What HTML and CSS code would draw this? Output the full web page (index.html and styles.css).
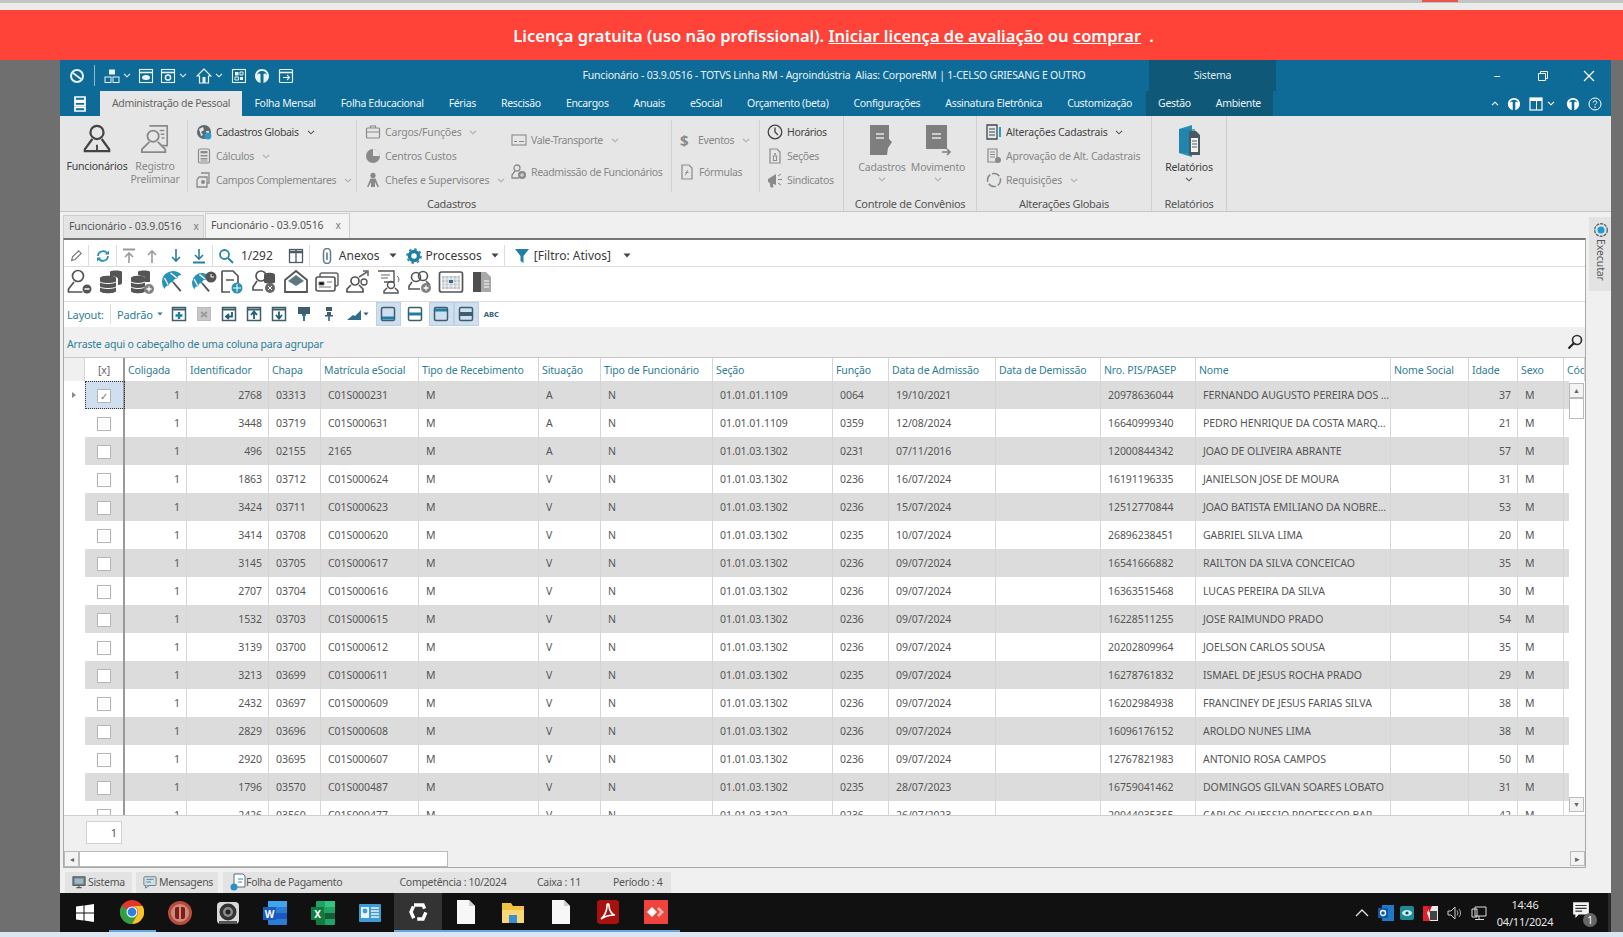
FILE: index.html
```html
<!DOCTYPE html>
<html lang="pt-BR">
<head>
<meta charset="utf-8">
<title>Funcionário - 03.9.0516 - TOTVS Linha RM</title>
<link rel="stylesheet" href="styles.css">
</head>
<body>
<svg class="defs" xmlns="http://www.w3.org/2000/svg">
  <symbol id="person" viewBox="0 0 32 32"><circle cx="16" cy="9" r="7" fill="none" stroke="currentColor" stroke-width="2.4"/><path d="M11 16 3 27v2h26v-2l-8-11" fill="none" stroke="currentColor" stroke-width="2.4"/><path d="M15 22h2v7h-2z" fill="currentColor"/></symbol>
  <symbol id="prelim" viewBox="0 0 32 32"><path d="M10 2h19v21h-6" fill="none" stroke="currentColor" stroke-width="1.8"/><path d="M21 7h5M22 11h4M23 15h3" stroke="currentColor" stroke-width="1.6"/><circle cx="14" cy="13" r="6" fill="none" stroke="currentColor" stroke-width="2"/><path d="M10 19 2 27v3h25v-3l-8-8" fill="none" stroke="currentColor" stroke-width="2"/></symbol>
  <symbol id="globe" viewBox="0 0 16 16"><circle cx="8" cy="8" r="7" fill="#5d6a72"/><path d="M3 5l4-2 1 3-3 2 2 3-2 1zM10 7l3 0 0 3-2 1z" fill="#e7e7e7"/><circle cx="12" cy="12" r="3.4" fill="#2a9cc7"/></symbol>
  <symbol id="calc" viewBox="0 0 16 16"><rect x="2.5" y="1" width="11" height="14" rx="1.5" fill="none" stroke="currentColor" stroke-width="1.2"/><rect x="4.5" y="3" width="7" height="2.4" fill="currentColor"/><path d="M4.5 7h7v1.6h-7zM4.5 10h7v1.6h-7zM4.5 12.6h7v1h-7z" fill="currentColor"/></symbol>
  <symbol id="fields" viewBox="0 0 16 16"><path d="M5 1h8v10h-2M3 5h8v10H1V8z" fill="none" stroke="currentColor" stroke-width="1.3"/><circle cx="7" cy="10" r="2" fill="currentColor"/></symbol>
  <symbol id="case" viewBox="0 0 16 16"><rect x="1.5" y="4" width="13" height="10" rx="1" fill="none" stroke="currentColor" stroke-width="1.2"/><path d="M5.5 4V2h5v2M1.5 8h13" fill="none" stroke="currentColor" stroke-width="1.2"/></symbol>
  <symbol id="pie" viewBox="0 0 16 16"><circle cx="8" cy="8" r="7" fill="currentColor"/><path d="M8 8V1a7 7 0 0 1 7 7z" fill="#e6e6e6"/></symbol>
  <symbol id="chief" viewBox="0 0 16 16"><circle cx="8" cy="3.4" r="2.6" fill="currentColor"/><path d="M5.5 6.5h5L12 10l2 5h-1.500L10 10v5H6v-5l-2.500 5H2l2-5z" fill="currentColor"/></symbol>
  <symbol id="ticket" viewBox="0 0 16 16"><rect x="1" y="3" width="14" height="10" fill="none" stroke="currentColor" stroke-width="1.1"/><path d="M3 9.5h3M8 9.5h5" stroke="currentColor"/></symbol>
  <symbol id="readm" viewBox="0 0 16 16"><circle cx="6" cy="4" r="3" fill="none" stroke="currentColor" stroke-width="1.3"/><path d="M4 7 1 11v3h7" fill="none" stroke="currentColor" stroke-width="1.3"/><circle cx="11" cy="11" r="4" fill="currentColor"/><path d="M9 11h4M11 9v4" stroke="#e6e6e6"/></symbol>
  <symbol id="formula" viewBox="0 0 16 16"><path d="M3 1h7l3 3v11H3z" fill="none" stroke="currentColor" stroke-width="1.2"/><path d="M9 6.5C7 6.5 8 11 6 11M6.5 8.5h3" fill="none" stroke="currentColor"/></symbol>
  <symbol id="clock" viewBox="0 0 16 16"><circle cx="8" cy="8" r="6.8" fill="none" stroke="currentColor" stroke-width="1.3"/><path d="M8 3.500V8l3 3" fill="none" stroke="currentColor" stroke-width="1.3"/></symbol>
  <symbol id="section" viewBox="0 0 16 16"><path d="M3 1h7l3 3v11H3z" fill="none" stroke="currentColor" stroke-width="1.2"/><rect x="6.4" y="8" width="3.2" height="4.5" fill="none" stroke="currentColor"/><circle cx="8" cy="6" r="1" fill="currentColor"/></symbol>
  <symbol id="horn" viewBox="0 0 16 16"><path d="M1 7l8-5v11L1 10z" fill="currentColor"/><path d="M3 10l1 5h2l-1-5zM11 4l3-2M11 7.500h4M11 11l3 2" stroke="currentColor" fill="currentColor"/></symbol>
  <symbol id="book" viewBox="0 0 28 32"><path d="M2 1h19v14l3 3-4 6-1 7H2z" fill="currentColor"/><path d="M8 10h8M8 14h8" stroke="#e6e6e6" stroke-width="1.6"/></symbol>
  <symbol id="bookgo" viewBox="0 0 28 32"><path d="M2 1h21v24H2z" fill="currentColor"/><path d="M8 10h9M8 14h9" stroke="#e6e6e6" stroke-width="1.6"/><path d="M18 28h8M23 25l3 3-3 3" stroke="currentColor" stroke-width="1.5" fill="none"/></symbol>
  <symbol id="altcad" viewBox="0 0 16 16"><path d="M1 1h10v14H1z" fill="none" stroke="#3d4a52" stroke-width="1.3"/><path d="M3 5h6M3 8h6M3 11h6" stroke="#3d4a52"/><path d="M14 3v10" stroke="#2a9cc7" stroke-width="2"/></symbol>
  <symbol id="aprov" viewBox="0 0 16 16"><path d="M2 1h9v13H2z" fill="none" stroke="currentColor" stroke-width="1.2"/><path d="M4 4h5M4 6.500h5M4 9h5" stroke="currentColor"/><circle cx="12" cy="12" r="3" fill="currentColor"/></symbol>
  <symbol id="req" viewBox="0 0 16 16"><path d="M8 1.500A6.500 6.500 0 0 1 14.500 8M14.500 8A6.500 6.500 0 0 1 8 14.500M8 14.500A6.500 6.500 0 0 1 1.500 8M1.500 8A6.500 6.500 0 0 1 8 1.500" fill="none" stroke="currentColor" stroke-width="1.500" stroke-dasharray="6 2"/></symbol>
  <symbol id="report" viewBox="0 0 24 34"><path d="M2 5 15 1v32L2 29z" fill="#2a8fb8"/><path d="M2 5h16v24H2z" fill="#1d7da6" opacity=".6"/><path d="M12 7h7l4 4v20H12z" fill="#4a5a63"/><path d="M14 14h7v14h-7z" fill="#f2f2f2"/><path d="M15 17h5M15 20h5M15 23h5" stroke="#4a5a63"/></symbol>
  <symbol id="chev" viewBox="0 0 8 5"><path d="M1 .8 4 3.800 7 .8" fill="none" stroke="currentColor" stroke-width="1.100"/></symbol>
  <symbol id="caret" viewBox="0 0 8 5"><path d="M.5.500h7L4 4.500z" fill="currentColor"/></symbol>

  <symbol id="q-target" viewBox="0 0 16 16"><circle cx="8" cy="8" r="6" fill="none" stroke="currentColor" stroke-width="2"/><path d="M4 5l8 6" stroke="currentColor" stroke-width="1.600"/></symbol>
  <symbol id="q-org" viewBox="0 0 16 16"><rect x="5" y="1.500" width="6" height="5" fill="currentColor"/><rect x="1" y="9" width="6" height="5.500" fill="none" stroke="currentColor"/><rect x="9" y="9" width="6" height="5.500" fill="none" stroke="currentColor"/></symbol>
  <symbol id="q-eye" viewBox="0 0 16 16"><rect x="1.500" y="1.500" width="13" height="13" fill="none" stroke="currentColor" stroke-width="1.100"/><path d="M1.500 4.500h13" stroke="currentColor" stroke-width="1.600"/><ellipse cx="8" cy="9.500" rx="4" ry="2.500" fill="currentColor"/></symbol>
  <symbol id="q-gear" viewBox="0 0 16 16"><rect x="1.500" y="1.500" width="13" height="13" fill="none" stroke="currentColor" stroke-width="1.100"/><path d="M1.500 4.500h13" stroke="currentColor" stroke-width="1.600"/><circle cx="8" cy="9.500" r="2.600" fill="none" stroke="currentColor" stroke-width="1.500"/></symbol>
  <symbol id="q-home" viewBox="0 0 16 16"><path d="M8 1 1 8h2.500v7h9V8H15z" fill="none" stroke="currentColor" stroke-width="1.200"/><rect x="6.500" y="9" width="3" height="6" fill="currentColor"/></symbol>
  <symbol id="q-grid" viewBox="0 0 16 16"><rect x="1.500" y="1.500" width="13" height="13" fill="none" stroke="currentColor" stroke-width="1.100"/><path d="M4 4h3.500v3.500H4zM9 9h3v3H9z" fill="currentColor"/><path d="M9 4h3v3H9zM4 9h3.500v3H4z" fill="none" stroke="currentColor"/></symbol>
  <symbol id="q-head" viewBox="0 0 16 16"><path d="M8 1C3.500 1 1 4.500 1 8c0 3 2 6 5.500 7V6C5 5 4 5.500 3 7c.5-2.500 2.500-4 5-4s4.500 1.500 5 4c-1-1.500-2-2-3.500-1v9c3.500-1 5.500-4 5.500-7 0-3.500-2.500-7-7-7z" fill="currentColor"/></symbol>
  <symbol id="q-export" viewBox="0 0 16 16"><rect x="1.500" y="1.500" width="13" height="13" rx="1" fill="none" stroke="currentColor" stroke-width="1.200"/><path d="M1.500 4.500h13" stroke="currentColor" stroke-width="1.600"/><path d="M5 9.500h6M9 7l2.500 2.500L9 12" fill="none" stroke="currentColor" stroke-width="1.100"/></symbol>
  <symbol id="q-menu" viewBox="0 0 14 16"><path d="M2 1h10v3.500H2zM2 6.200h10v3.500H2zM2 11.500h10V15H2z" fill="none" stroke="currentColor" stroke-width="1.700"/></symbol>
  <symbol id="q-restore" viewBox="0 0 12 12"><path d="M1.500 3.500h7v7h-7zM3.500 3.500v-2h7v7h-2" fill="none" stroke="currentColor" stroke-width="1"/></symbol>
  <symbol id="q-x" viewBox="0 0 12 12"><path d="M1 1l10 10M11 1 1 11" fill="none" stroke="currentColor" stroke-width="1.200"/></symbol>
  <symbol id="q-panel" viewBox="0 0 14 14"><rect x="1" y="1" width="12" height="12" fill="none" stroke="currentColor" stroke-width="1.200"/><rect x="1" y="1" width="12" height="3" fill="currentColor"/><path d="M7.500 4v9" stroke="currentColor"/></symbol>
  <symbol id="q-help" viewBox="0 0 14 14"><circle cx="7" cy="7" r="6" fill="none" stroke="currentColor"/><path d="M5.200 5.500C5.200 3 9 3.400 8.800 5.400 8.700 6.700 7 6.800 7 8.300" fill="none" stroke="currentColor"/><circle cx="7" cy="10.300" r=".8" fill="currentColor"/></symbol>

  <symbol id="t-pencil" viewBox="0 0 16 16"><path d="M3 13l1-4 7-7 3 3-7 7z" fill="none" stroke="#777" stroke-width="1.300"/></symbol>
  <symbol id="t-refresh" viewBox="0 0 16 16"><path d="M13 8a5 5 0 0 1-9.500 2M3 8a5 5 0 0 1 9.500-2" fill="none" stroke="#2a93b5" stroke-width="1.800"/><path d="M10 6.500h4V2.500zM6 9.500H2v4z" fill="#2a93b5"/></symbol>
  <symbol id="t-top" viewBox="0 0 16 16"><path d="M2 1.500h12" stroke="#9a9a9a" stroke-width="2"/><path d="M8 15V5M4 9l4-4 4 4" fill="none" stroke="#9a9a9a" stroke-width="1.600"/></symbol>
  <symbol id="t-up" viewBox="0 0 16 16"><path d="M8 15V3M4 7l4-4 4 4" fill="none" stroke="#9a9a9a" stroke-width="1.600"/></symbol>
  <symbol id="t-down" viewBox="0 0 16 16"><path d="M8 1v12M4 9l4 4 4-4" fill="none" stroke="#2a7fa0" stroke-width="1.600"/></symbol>
  <symbol id="t-bottom" viewBox="0 0 16 16"><path d="M8 1v10M4 7l4 4 4-4" fill="none" stroke="#2a7fa0" stroke-width="1.600"/><path d="M2 14.500h12" stroke="#2a7fa0" stroke-width="2"/></symbol>
  <symbol id="t-search" viewBox="0 0 16 16"><circle cx="6.500" cy="6.500" r="4.500" fill="none" stroke="#2a86a8" stroke-width="1.800"/><path d="M10 10l5 5" stroke="#2a86a8" stroke-width="2"/></symbol>
  <symbol id="t-cols" viewBox="0 0 16 16"><rect x="1.500" y="1.500" width="13" height="13" fill="none" stroke="#4a5a63" stroke-width="1.300"/><path d="M1.500 4h13" stroke="#4a5a63" stroke-width="2.500"/><path d="M8 2v12" stroke="#4a5a63" stroke-width="1.300"/></symbol>
  <symbol id="t-clip" viewBox="0 0 16 16"><path d="M4.500 4a3.500 3.500 0 0 1 7 0v8a3.500 3.500 0 0 1-7 0z" fill="none" stroke="#5f7c88" stroke-width="1.500"/><path d="M7 4.500h2V12H7z" fill="#7d98a3"/></symbol>
  <symbol id="t-gear" viewBox="0 0 16 16"><circle cx="8" cy="8" r="4.500" fill="none" stroke="#1f7fa3" stroke-width="3.500"/><circle cx="8" cy="8" r="7" fill="none" stroke="#1f7fa3" stroke-width="1.500" stroke-dasharray="2.500 3"/></symbol>
  <symbol id="t-funnel" viewBox="0 0 16 16"><path d="M1 1h14L9.500 8v7l-3-2V8z" fill="#1f7fa3"/></symbol>

  <symbol id="a-user" viewBox="0 0 26 26"><circle cx="11" cy="7" r="5.500" fill="none" stroke="#555" stroke-width="1.700"/><path d="M7 13 1.500 20v3h14" fill="none" stroke="#555" stroke-width="1.700"/><circle cx="20" cy="20" r="4.500" fill="#555"/><path d="M17.500 20h5" stroke="#fff" stroke-width="1.500"/></symbol>
  <symbol id="a-db" viewBox="0 0 26 26"><path d="M12 3c0-2 12-2 12 0v11c0 1-2 2-4 2v-6c0-2-4-3-8-3z" fill="#555"/><path d="M2 9c0-3 16-3 16 0v13c0 3-16 3-16 0z" fill="#555"/><path d="M2 13c3 2 13 2 16 0M2 18c3 2 13 2 16 0" fill="none" stroke="#fff"/></symbol>
  <symbol id="a-dbp" viewBox="0 0 26 26"><path d="M2 9c0-3 14-3 14 0v13c0 3-14 3-14 0z" fill="#555"/><path d="M9 3c0-2 12-2 12 0v10H16V8l-7-2z" fill="#555"/><path d="M2 13c3 2 11 2 14 0M2 18c3 2 11 2 14 0" fill="none" stroke="#fff"/><circle cx="20" cy="20" r="5" fill="#808080"/><path d="M17.500 20h5M20 17.500v5" stroke="#fff" stroke-width="1.300"/></symbol>
  <symbol id="a-umb" viewBox="0 0 26 26"><g transform="rotate(-40 13 13)"><path d="M2 13a11 11 0 0 1 22 0c-2-1.500-4-1.500-5.500 0-1.500-1.500-4-1.500-5.500 0-1.500-1.500-4-1.500-5.500 0C6 11.500 4 11.500 2 13z" fill="#2a93b5"/><path d="M9 4.500 7.500 12M17 4.500l1.500 7.500" stroke="#fff" stroke-width="1.300"/><path d="M13 13v12" stroke="#555" stroke-width="1.900"/></g></symbol>
  <symbol id="a-umbc" viewBox="0 0 26 26"><g transform="rotate(-40 11 14)"><path d="M1 14a10 10 0 0 1 20 0c-2-1.500-3.500-1.500-5 0-1.500-1.500-3.500-1.500-5 0-1.500-1.500-3.500-1.500-5 0-1.500-1.500-3-1.500-5 0z" fill="#2a93b5"/><path d="M7.500 6 6 13M14.500 6 16 13" stroke="#fff" stroke-width="1.300"/><path d="M11 14v11" stroke="#555" stroke-width="1.900"/></g><circle cx="20" cy="8" r="5.500" fill="#555"/><path d="M20 5v3h3" stroke="#fff" fill="none"/></symbol>
  <symbol id="a-docg" viewBox="0 0 26 26"><path d="M4 2h11l5 5v7M4 2v21h8" fill="none" stroke="#555" stroke-width="1.700"/><path d="M8 11h8" stroke="#555" stroke-width="1.500"/><circle cx="19" cy="19" r="5.500" fill="#2a93b5"/><path d="M15 19h8M19 15v8" stroke="#fff"/></symbol>
  <symbol id="a-userdb" viewBox="0 0 26 26"><circle cx="9" cy="7" r="5" fill="none" stroke="#555" stroke-width="1.700"/><path d="M5 12 1 18v3h10" fill="none" stroke="#555" stroke-width="1.700"/><path d="M12 6c0-3 11-3 11 0v7c0 2-11 2-11 0z" fill="#555"/><circle cx="18" cy="19" r="5" fill="#666"/><path d="M16 17l4 4M20 17l-4 4" stroke="#fff"/></symbol>
  <symbol id="a-mail" viewBox="0 0 26 26"><path d="M2 11 13 2l11 9v12H2z" fill="none" stroke="#555" stroke-width="1.800"/><path d="M5 12l8-6 8 6-8 5z" fill="#5d7783"/></symbol>
  <symbol id="a-card" viewBox="0 0 26 26"><rect x="6" y="4" width="18" height="13" rx="2" fill="none" stroke="#666" stroke-width="1.500"/><rect x="2" y="8" width="19" height="14" rx="2" fill="#fff" stroke="#555" stroke-width="1.600"/><path d="M5 13h5v3H5zM5 18h12M13 13h5" stroke="#777"/></symbol>
  <symbol id="a-usergo" viewBox="0 0 26 26"><circle cx="10" cy="12" r="4" fill="none" stroke="#555" stroke-width="1.700"/><path d="M6 16l-4 4v3h16v-3l-4-4" fill="none" stroke="#555" stroke-width="1.700"/><path d="M14 8l8-5M18 2h5v5" fill="none" stroke="#666" stroke-width="1.500"/><circle cx="19" cy="13" r="3" fill="none" stroke="#555" stroke-width="1.300"/></symbol>
  <symbol id="a-userdoc" viewBox="0 0 26 26"><path d="M2 2h16v11H8" fill="none" stroke="#555" stroke-width="1.400"/><path d="M5 6h9M5 9h7" stroke="#666"/><circle cx="15" cy="16" r="3.500" fill="none" stroke="#555" stroke-width="1.500"/><path d="M11 19l-3 3v2h14v-2l-3-3" fill="none" stroke="#555" stroke-width="1.500"/><path d="M21 7a4 4 0 0 1 1 6" stroke="#666" fill="none"/></symbol>
  <symbol id="a-userp" viewBox="0 0 26 26"><circle cx="9" cy="8" r="4.500" fill="none" stroke="#555" stroke-width="1.600"/><circle cx="16" cy="7" r="4.500" fill="none" stroke="#555" stroke-width="1.600"/><path d="M5 13l-3 4v3h11M19 12l4 4" fill="none" stroke="#555" stroke-width="1.600"/><circle cx="19" cy="19" r="5" fill="#808080"/><path d="M16.500 19h5M19 16.500v5" stroke="#fff" stroke-width="1.300"/></symbol>
  <symbol id="a-cal" viewBox="0 0 26 26"><rect x="1.500" y="3" width="23" height="20" rx="2" fill="#fff" stroke="#555" stroke-width="1.700"/><path d="M4 7h18v13H4z" fill="#bcc4c8"/><path d="M7 7v13M11 7v13M15 7v13M19 7v13M4 10h18M4 14h18M4 17h18" stroke="#fff" stroke-width=".8"/><rect x="11" y="11" width="4" height="3" fill="#2a6f8a"/></symbol>
  <symbol id="a-doc" viewBox="0 0 26 26"><path d="M4 3h10v20H4z" fill="#4f4f4f"/><path d="M12 3h5l5 5v15H12z" fill="#a9a9a9"/><path d="M15 12h5M15 15h5M15 18h5" stroke="#fff"/></symbol>

  <symbol id="l-new" viewBox="0 0 16 16"><rect x="1.500" y="1.500" width="13" height="13" fill="none" stroke="#3f5e6c" stroke-width="1.500"/><path d="M1.500 3.500h13" stroke="#3f5e6c" stroke-width="2"/><path d="M4.500 9.500h7M8 6v7" stroke="#1f7fa3" stroke-width="2.400"/></symbol>
  <symbol id="l-del" viewBox="0 0 16 16"><rect x="1.500" y="1.500" width="13" height="13" fill="#c7c7c7" stroke="#bbb"/><path d="M5 6l6 5M11 6l-6 5" stroke="#999" stroke-width="1.800"/></symbol>
  <symbol id="l-ret" viewBox="0 0 16 16"><rect x="1.500" y="1.500" width="13" height="13" fill="none" stroke="#3f5e6c" stroke-width="1.500"/><path d="M1.500 3.500h13" stroke="#3f5e6c" stroke-width="2"/><path d="M11 6v4.500H6M8 8l-3 2.500L8 13" fill="none" stroke="#1f5f7a" stroke-width="1.800"/></symbol>
  <symbol id="l-up" viewBox="0 0 16 16"><rect x="1.500" y="1.500" width="13" height="13" fill="none" stroke="#3f5e6c" stroke-width="1.500"/><path d="M1.500 3.500h13" stroke="#3f5e6c" stroke-width="2"/><path d="M8 13V7M5 9l3-3.500L11 9" fill="none" stroke="#1f5f7a" stroke-width="1.800"/></symbol>
  <symbol id="l-down" viewBox="0 0 16 16"><rect x="1.500" y="1.500" width="13" height="13" fill="none" stroke="#3f5e6c" stroke-width="1.500"/><path d="M1.500 3.500h13" stroke="#3f5e6c" stroke-width="2"/><path d="M8 5.500v6M5 9l3 3.500L11 9" fill="none" stroke="#1f5f7a" stroke-width="1.800"/></symbol>
  <symbol id="l-paint" viewBox="0 0 16 16"><path d="M2 1h12v7H2z" fill="#3f5e6c"/><path d="M6 8h4v2H6zM7 10h2v5H7z" fill="#2a7fa0"/></symbol>
  <symbol id="l-pin" viewBox="0 0 16 16"><path d="M5 1h6v4H5zM6 6h4v4H6zM4 9h8v1.500H4z" fill="#3f5e6c"/><path d="M8 10v5" stroke="#2a7fa0" stroke-width="1.800"/></symbol>
  <symbol id="l-chart" viewBox="0 0 16 16"><path d="M1 14 7 9l2 1 6-6v10z" fill="#2f6f8c"/></symbol>
  <symbol id="l-b1" viewBox="0 0 16 16"><rect x="1.500" y="1.500" width="13" height="13" rx="1.500" fill="none" stroke="#3f5e6c" stroke-width="1.500"/><path d="M2 12h12" stroke="#1f7fa3" stroke-width="3"/></symbol>
  <symbol id="l-b2" viewBox="0 0 16 16"><rect x="1.500" y="1.500" width="13" height="13" rx="1.500" fill="none" stroke="#3f5e6c" stroke-width="1.500"/><path d="M2 8h12" stroke="#1f7fa3" stroke-width="3"/></symbol>
  <symbol id="l-b3" viewBox="0 0 16 16"><rect x="1.500" y="1.500" width="13" height="13" rx="1.500" fill="none" stroke="#3f5e6c" stroke-width="1.500"/><path d="M2 4h12" stroke="#1f7fa3" stroke-width="3"/></symbol>
  <symbol id="l-b4" viewBox="0 0 16 16"><rect x="1.500" y="1.500" width="13" height="13" rx="1.500" fill="none" stroke="#3f5e6c" stroke-width="1.500"/><path d="M2 8h12" stroke="#3f5e6c" stroke-width="4"/></symbol>
  <symbol id="s-exec" viewBox="0 0 16 16"><circle cx="8" cy="8" r="6.300" fill="none" stroke="#5b6a72" stroke-width="1.400" stroke-dasharray="3 1"/><circle cx="8" cy="8" r="3.500" fill="#1a9ccf"/></symbol>
  <symbol id="s-mag" viewBox="0 0 16 16"><circle cx="10" cy="6" r="4.500" fill="none" stroke="#333" stroke-width="1.700"/><path d="M7 9l-5.500 5.500" stroke="#222" stroke-width="2.200"/></symbol>
  <symbol id="s-monitor" viewBox="0 0 16 16"><rect x="1" y="2" width="14" height="10" fill="#6a7e88" stroke="#555"/><rect x="3" y="4" width="10" height="6" fill="#9fb8c4"/><path d="M5 14.500h6M8 12v2" stroke="#555" stroke-width="1.300"/></symbol>
  <symbol id="s-msg" viewBox="0 0 16 16"><rect x="1" y="2" width="14" height="10" rx="1" fill="#cfdfe7" stroke="#5b7582"/><path d="M3 12v3l4-3" fill="#cfdfe7" stroke="#5b7582"/><path d="M4 5h8M4 8h5" stroke="#5b7582"/></symbol>
  <symbol id="s-folha" viewBox="0 0 16 18"><path d="M4 1h9l2 2v11H4z" fill="#fff" stroke="#667"/><circle cx="4" cy="14" r="3.500" fill="#2a93c5"/><path d="M8 6h5M8 9h4" stroke="#2a93c5" stroke-width="1.200"/></symbol>
  <symbol id="w-paper" viewBox="0 0 20 26"><path d="M1 1h12l6 6v18H1z" fill="#f7f7f7"/><path d="M13 1l6 6h-6z" fill="#cfcfcf"/></symbol>
</svg>

<div class="browserbar"><span class="browsermark"></span></div>
<div class="banner">Licença gratuita (uso não profissional). <a class="banner-link">Iniciar licença de avaliação</a> ou <a class="banner-link">comprar</a> <span class="banner-dot">.</span></div>

<div class="desk">
  <main class="window">
    <header class="titlebar">
      <div class="qat">
        <svg class="qi"><use href="#q-target"/></svg>
        <span class="qat-sep"></span>
        <svg class="qi"><use href="#q-org"/></svg><svg class="qc"><use href="#chev"/></svg>
        <svg class="qi q7"><use href="#q-eye"/></svg>
        <svg class="qi q6"><use href="#q-gear"/></svg><svg class="qc"><use href="#chev"/></svg>
        <svg class="qi q9"><use href="#q-home"/></svg><svg class="qc"><use href="#chev"/></svg>
        <svg class="qi q8"><use href="#q-grid"/></svg>
        <svg class="qi q7"><use href="#q-head"/></svg>
        <svg class="qi q8"><use href="#q-export"/></svg>
      </div>
      <div class="wintitle">Funcionário - 03.9.0516 - TOTVS Linha RM - Agroindústria&nbsp; Alias: CorporeRM | 1-CELSO GRIESANG E OUTRO</div>
      <div class="sistema">Sistema</div>
      <div class="winbtns">
        <span class="wb">–</span>
        <svg class="wbi"><use href="#q-restore"/></svg>
        <svg class="wbi"><use href="#q-x"/></svg>
      </div>
    </header>

    <nav class="tabbar">
      <svg class="menuicon"><use href="#q-menu"/></svg>
      <span class="tab tab-active">Administração de Pessoal</span>
      <span class="tab">Folha Mensal</span>
      <span class="tab">Folha Educacional</span>
      <span class="tab">Férias</span>
      <span class="tab">Rescisão</span>
      <span class="tab">Encargos</span>
      <span class="tab">Anuais</span>
      <span class="tab">eSocial</span>
      <span class="tab">Orçamento (beta)</span>
      <span class="tab">Configurações</span>
      <span class="tab">Assinatura Eletrônica</span>
      <span class="tab">Customização</span>
      <div class="tab-ctx"><span class="tab">Gestão</span><span class="tab">Ambiente</span></div>
      <div class="tab-tools">
        <svg class="ti-chev ti-up"><use href="#chev"/></svg>
        <svg class="ti"><use href="#q-head"/></svg>
        <svg class="ti"><use href="#q-panel"/></svg>
        <svg class="ti-chev ti-near"><use href="#chev"/></svg>
        <svg class="ti"><use href="#q-head"/></svg>
        <svg class="ti"><use href="#q-help"/></svg>
      </div>
    </nav>

    <section class="ribbon">
      <div class="rgroup g-cad">
        <div class="rbody">
          <div class="rcol c-big">
            <div class="bigbtn"><svg class="bigicon dark"><use href="#person"/></svg><span class="on">Funcionários</span></div>
            <div class="bigbtn"><svg class="bigicon"><use href="#prelim"/></svg><span>Registro<br>Preliminar</span></div>
          </div>
          <div class="rcol c-a sep">
            <div class="ritem on"><svg class="ri"><use href="#globe"/></svg>Cadastros Globais<svg class="rc"><use href="#chev"/></svg></div>
            <div class="ritem"><svg class="ri"><use href="#calc"/></svg>Cálculos<svg class="rc"><use href="#chev"/></svg></div>
            <div class="ritem"><svg class="ri"><use href="#fields"/></svg>Campos Complementares<svg class="rc"><use href="#chev"/></svg></div>
          </div>
          <div class="rcol c-b sep">
            <div class="ritem"><svg class="ri"><use href="#case"/></svg>Cargos/Funções<svg class="rc"><use href="#chev"/></svg></div>
            <div class="ritem"><svg class="ri"><use href="#pie"/></svg>Centros Custos</div>
            <div class="ritem"><svg class="ri"><use href="#chief"/></svg>Chefes e Supervisores<svg class="rc"><use href="#chev"/></svg></div>
          </div>
          <div class="rcol c-c two">
            <div class="ritem"><svg class="ri"><use href="#ticket"/></svg>Vale-Transporte<svg class="rc"><use href="#chev"/></svg></div>
            <div class="ritem"><svg class="ri"><use href="#readm"/></svg>Readmissão de Funcionários</div>
          </div>
          <div class="rcol c-d two sep">
            <div class="ritem"><span class="dollar">$</span>Eventos<svg class="rc"><use href="#chev"/></svg></div>
            <div class="ritem"><svg class="ri"><use href="#formula"/></svg>Fórmulas</div>
          </div>
          <div class="rcol c-e sep">
            <div class="ritem on"><svg class="ri"><use href="#clock"/></svg>Horários</div>
            <div class="ritem"><svg class="ri"><use href="#section"/></svg>Seções</div>
            <div class="ritem"><svg class="ri"><use href="#horn"/></svg>Sindicatos</div>
          </div>
        </div>
        <div class="rlabel">Cadastros</div>
      </div>
      <div class="rgroup g-conv">
        <div class="rbody rcenter">
          <div class="bigbtn b-conv"><svg class="bookicon"><use href="#book"/></svg><span>Cadastros</span><svg class="rc2"><use href="#chev"/></svg></div>
          <div class="bigbtn b-conv"><svg class="bookicon"><use href="#bookgo"/></svg><span>Movimento</span><svg class="rc2"><use href="#chev"/></svg></div>
        </div>
        <div class="rlabel">Controle de Convênios</div>
      </div>
      <div class="rgroup g-alt">
        <div class="rbody">
          <div class="rcol c-f">
            <div class="ritem on"><svg class="ri"><use href="#altcad"/></svg>Alterações Cadastrais<svg class="rc"><use href="#chev"/></svg></div>
            <div class="ritem"><svg class="ri"><use href="#aprov"/></svg>Aprovação de Alt. Cadastrais</div>
            <div class="ritem"><svg class="ri"><use href="#req"/></svg>Requisições<svg class="rc"><use href="#chev"/></svg></div>
          </div>
        </div>
        <div class="rlabel">Alterações Globais</div>
      </div>
      <div class="rgroup g-rel">
        <div class="rbody rcenter">
          <div class="bigbtn b-rel"><svg class="reporticon"><use href="#report"/></svg><span class="on">Relatórios</span><svg class="rc2 on"><use href="#chev"/></svg></div>
        </div>
        <div class="rlabel">Relatórios</div>
      </div>
    </section>

    <div class="doctabs">
      <span class="doctab">Funcionário - 03.9.0516<span class="x">x</span></span>
      <span class="doctab doctab-active">Funcionário - 03.9.0516<span class="x">x</span></span>
    </div>

    <div class="workspace">
      <div class="panel">
        <div class="tb tb1">
          <svg class="t1 t-pen"><use href="#t-pencil"/></svg><i class="vs"></i>
          <svg class="t1 t-r"><use href="#t-refresh"/></svg><i class="vs"></i>
          <svg class="t1 t-t"><use href="#t-top"/></svg>
          <svg class="t1 g8"><use href="#t-up"/></svg>
          <svg class="t1 g8"><use href="#t-down"/></svg>
          <svg class="t1 g8"><use href="#t-bottom"/></svg><i class="vs"></i>
          <svg class="t1"><use href="#t-search"/></svg>
          <span class="tt pg">1/292</span>
          <svg class="t1"><use href="#t-cols"/></svg><i class="vs"></i>
          <svg class="t1 g-c"><use href="#t-clip"/></svg>
          <span class="tt">Anexos</span><svg class="ca"><use href="#caret"/></svg>
          <svg class="t1 g-p"><use href="#t-gear"/></svg>
          <span class="tt">Processos</span><svg class="ca"><use href="#caret"/></svg><i class="vs"></i>
          <svg class="t1 g-c"><use href="#t-funnel"/></svg>
          <span class="tt">[Filtro: Ativos]</span><svg class="ca ca-f"><use href="#caret"/></svg>
        </div>
        <div class="tb tb2">
          <svg class="a"><use href="#a-user"/></svg>
          <svg class="a"><use href="#a-db"/></svg>
          <svg class="a"><use href="#a-dbp"/></svg>
          <svg class="a"><use href="#a-umb"/></svg>
          <svg class="a"><use href="#a-umbc"/></svg>
          <svg class="a a-t"><use href="#a-docg"/></svg>
          <svg class="a a-w"><use href="#a-userdb"/></svg>
          <svg class="a"><use href="#a-mail"/></svg>
          <svg class="a"><use href="#a-card"/></svg>
          <svg class="a"><use href="#a-usergo"/></svg>
          <svg class="a"><use href="#a-userdoc"/></svg>
          <svg class="a"><use href="#a-userp"/></svg>
          <svg class="a"><use href="#a-cal"/></svg>
          <svg class="a"><use href="#a-doc"/></svg>
        </div>
        <div class="tb tb3">
          <span class="lt">Layout:</span><i class="vs vs2"></i>
          <span class="lt lt-p">Padrão</span><svg class="ca2"><use href="#caret"/></svg>
          <span class="lb l-first"><svg class="l"><use href="#l-new"/></svg></span>
          <span class="lb"><svg class="l"><use href="#l-del"/></svg></span>
          <span class="lb"><svg class="l"><use href="#l-ret"/></svg></span>
          <span class="lb"><svg class="l"><use href="#l-up"/></svg></span>
          <span class="lb"><svg class="l"><use href="#l-down"/></svg></span>
          <span class="lb"><svg class="l"><use href="#l-paint"/></svg></span>
          <span class="lb"><svg class="l"><use href="#l-pin"/></svg></span>
          <span class="lb"><svg class="l"><use href="#l-chart"/></svg></span><svg class="ca3"><use href="#caret"/></svg>
          <span class="lb lb-on"><svg class="l"><use href="#l-b1"/></svg></span>
          <span class="lb lb-g"><svg class="l"><use href="#l-b2"/></svg></span>
          <span class="lb lb-on"><svg class="l"><use href="#l-b3"/></svg></span>
          <span class="lb lb-on"><svg class="l"><use href="#l-b4"/></svg></span>
          <span class="abc">ABC</span>
        </div>
        <div class="groupbar"><span>Arraste aqui o cabeçalho de uma coluna para agrupar</span><svg class="mag"><use href="#s-mag"/></svg></div>
        <div class="gridwrap">
          <table class="grid">
            <colgroup>
              <col class="w21"><col class="w40"><col class="w62"><col class="w82"><col class="w52"><col class="w98"><col class="w120"><col class="w62b"><col class="w112"><col class="w120"><col class="w56"><col class="w107"><col class="w105"><col class="w95"><col class="w195"><col class="w78"><col class="w49"><col class="w46"><col class="w22">
            </colgroup>
            <thead>
              <tr><th class="rh"></th><th class="chk">[x]</th><th>Coligada</th><th>Identificador</th><th>Chapa</th><th>Matrícula eSocial</th><th>Tipo de Recebimento</th><th>Situação</th><th>Tipo de Funcionário</th><th>Seção</th><th>Função</th><th>Data de Admissão</th><th>Data de Demissão</th><th>Nro. PIS/PASEP</th><th>Nome</th><th>Nome Social</th><th>Idade</th><th>Sexo</th><th>Cód</th></tr>
            </thead>
            <tbody>
              <tr class="alt"><td class="rh"><span class="arrow"></span></td><td class="chk sel"><span class="cb cb-on">✓</span></td><td class="r">1</td><td class="r">2768</td><td>03313</td><td>C01S000231</td><td>M</td><td>A</td><td>N</td><td>01.01.01.1109</td><td>0064</td><td>19/10/2021</td><td></td><td>20978636044</td><td>FERNANDO AUGUSTO PEREIRA DOS ...</td><td></td><td class="r">37</td><td>M</td><td class="gut"></td></tr>
              <tr><td class="rh"></td><td class="chk"><span class="cb"></span></td><td class="r">1</td><td class="r">3448</td><td>03719</td><td>C01S000631</td><td>M</td><td>A</td><td>N</td><td>01.01.01.1109</td><td>0359</td><td>12/08/2024</td><td></td><td>16640999340</td><td>PEDRO HENRIQUE DA COSTA MARQ...</td><td></td><td class="r">21</td><td>M</td><td class="gut"></td></tr>
              <tr class="alt"><td class="rh"></td><td class="chk"><span class="cb"></span></td><td class="r">1</td><td class="r">496</td><td>02155</td><td>2165</td><td>M</td><td>A</td><td>N</td><td>01.01.03.1302</td><td>0231</td><td>07/11/2016</td><td></td><td>12000844342</td><td>JOAO DE OLIVEIRA ABRANTE</td><td></td><td class="r">57</td><td>M</td><td class="gut"></td></tr>
              <tr><td class="rh"></td><td class="chk"><span class="cb"></span></td><td class="r">1</td><td class="r">1863</td><td>03712</td><td>C01S000624</td><td>M</td><td>V</td><td>N</td><td>01.01.03.1302</td><td>0236</td><td>16/07/2024</td><td></td><td>16191196335</td><td>JANIELSON JOSE DE MOURA</td><td></td><td class="r">31</td><td>M</td><td class="gut"></td></tr>
              <tr class="alt"><td class="rh"></td><td class="chk"><span class="cb"></span></td><td class="r">1</td><td class="r">3424</td><td>03711</td><td>C01S000623</td><td>M</td><td>V</td><td>N</td><td>01.01.03.1302</td><td>0236</td><td>15/07/2024</td><td></td><td>12512770844</td><td>JOAO BATISTA EMILIANO DA NOBRE...</td><td></td><td class="r">53</td><td>M</td><td class="gut"></td></tr>
              <tr><td class="rh"></td><td class="chk"><span class="cb"></span></td><td class="r">1</td><td class="r">3414</td><td>03708</td><td>C01S000620</td><td>M</td><td>V</td><td>N</td><td>01.01.03.1302</td><td>0235</td><td>10/07/2024</td><td></td><td>26896238451</td><td>GABRIEL SILVA LIMA</td><td></td><td class="r">20</td><td>M</td><td class="gut"></td></tr>
              <tr class="alt"><td class="rh"></td><td class="chk"><span class="cb"></span></td><td class="r">1</td><td class="r">3145</td><td>03705</td><td>C01S000617</td><td>M</td><td>V</td><td>N</td><td>01.01.03.1302</td><td>0236</td><td>09/07/2024</td><td></td><td>16541666882</td><td>RAILTON DA SILVA CONCEICAO</td><td></td><td class="r">35</td><td>M</td><td class="gut"></td></tr>
              <tr><td class="rh"></td><td class="chk"><span class="cb"></span></td><td class="r">1</td><td class="r">2707</td><td>03704</td><td>C01S000616</td><td>M</td><td>V</td><td>N</td><td>01.01.03.1302</td><td>0236</td><td>09/07/2024</td><td></td><td>16363515468</td><td>LUCAS PEREIRA DA SILVA</td><td></td><td class="r">30</td><td>M</td><td class="gut"></td></tr>
              <tr class="alt"><td class="rh"></td><td class="chk"><span class="cb"></span></td><td class="r">1</td><td class="r">1532</td><td>03703</td><td>C01S000615</td><td>M</td><td>V</td><td>N</td><td>01.01.03.1302</td><td>0236</td><td>09/07/2024</td><td></td><td>16228511255</td><td>JOSE RAIMUNDO PRADO</td><td></td><td class="r">54</td><td>M</td><td class="gut"></td></tr>
              <tr><td class="rh"></td><td class="chk"><span class="cb"></span></td><td class="r">1</td><td class="r">3139</td><td>03700</td><td>C01S000612</td><td>M</td><td>V</td><td>N</td><td>01.01.03.1302</td><td>0236</td><td>09/07/2024</td><td></td><td>20202809964</td><td>JOELSON CARLOS SOUSA</td><td></td><td class="r">35</td><td>M</td><td class="gut"></td></tr>
              <tr class="alt"><td class="rh"></td><td class="chk"><span class="cb"></span></td><td class="r">1</td><td class="r">3213</td><td>03699</td><td>C01S000611</td><td>M</td><td>V</td><td>N</td><td>01.01.03.1302</td><td>0235</td><td>09/07/2024</td><td></td><td>16278761832</td><td>ISMAEL DE JESUS ROCHA PRADO</td><td></td><td class="r">29</td><td>M</td><td class="gut"></td></tr>
              <tr><td class="rh"></td><td class="chk"><span class="cb"></span></td><td class="r">1</td><td class="r">2432</td><td>03697</td><td>C01S000609</td><td>M</td><td>V</td><td>N</td><td>01.01.03.1302</td><td>0236</td><td>09/07/2024</td><td></td><td>16202984938</td><td>FRANCINEY DE JESUS FARIAS SILVA</td><td></td><td class="r">38</td><td>M</td><td class="gut"></td></tr>
              <tr class="alt"><td class="rh"></td><td class="chk"><span class="cb"></span></td><td class="r">1</td><td class="r">2829</td><td>03696</td><td>C01S000608</td><td>M</td><td>V</td><td>N</td><td>01.01.03.1302</td><td>0236</td><td>09/07/2024</td><td></td><td>16096176152</td><td>AROLDO NUNES LIMA</td><td></td><td class="r">38</td><td>M</td><td class="gut"></td></tr>
              <tr><td class="rh"></td><td class="chk"><span class="cb"></span></td><td class="r">1</td><td class="r">2920</td><td>03695</td><td>C01S000607</td><td>M</td><td>V</td><td>N</td><td>01.01.03.1302</td><td>0236</td><td>09/07/2024</td><td></td><td>12767821983</td><td>ANTONIO ROSA CAMPOS</td><td></td><td class="r">50</td><td>M</td><td class="gut"></td></tr>
              <tr class="alt"><td class="rh"></td><td class="chk"><span class="cb"></span></td><td class="r">1</td><td class="r">1796</td><td>03570</td><td>C01S000487</td><td>M</td><td>V</td><td>N</td><td>01.01.03.1302</td><td>0235</td><td>28/07/2023</td><td></td><td>16759041462</td><td>DOMINGOS GILVAN SOARES LOBATO</td><td></td><td class="r">31</td><td>M</td><td class="gut"></td></tr>
              <tr><td class="rh"></td><td class="chk"><span class="cb"></span></td><td class="r">1</td><td class="r">2426</td><td>03560</td><td>C01S000477</td><td>M</td><td>V</td><td>N</td><td>01.01.03.1302</td><td>0236</td><td>26/07/2023</td><td></td><td>20044035355</td><td>CARLOS QUESSIO PROFESSOR BAR...</td><td></td><td class="r">42</td><td>M</td><td class="gut"></td></tr>
            </tbody>
          </table>
          <div class="vscroll"><span class="sbtn">▲</span><span class="vthumb"></span><span class="vspace"></span><span class="sbtn">▼</span></div>
        </div>
        <div class="gridfoot">
          <div class="sumrow"><span class="sumbox">1</span></div>
          <div class="hscroll"><span class="harrow">◂</span><span class="hthumb"></span><span class="hspace"></span><span class="sbtn sbtn-r">▸</span></div>
        </div>
      </div>
      <aside class="exec"><svg class="execicon"><use href="#s-exec"/></svg><span class="exectext">Executar</span></aside>
    </div>

    <footer class="status">
      <span class="st st-sis"><svg class="sti"><use href="#s-monitor"/></svg>Sistema</span>
      <span class="st st-men"><svg class="sti"><use href="#s-msg"/></svg>Mensagens</span>
      <span class="st st-info"><svg class="sti sti-f"><use href="#s-folha"/></svg><span class="st-f">Folha de Pagamento</span><span class="st-c">Competência : 10/2024</span><span class="st-x">Caixa : 11</span><span class="st-p">Período : 4</span></span>
    </footer>

    <div class="taskbar">
      <div class="tk"><svg class="ti-w" viewBox="0 0 18 18"><path d="M0 2.600 7.500 1.500v7H0zM8.500 1.400 18 0v8.500H8.500zM0 9.500h7.500v7L0 15.400zM8.500 9.500H18V18l-9.500-1.400z" fill="#fff"/></svg></div>
      <div class="tk tk-run"><svg class="ti-c" viewBox="0 0 24 24"><circle cx="12" cy="12" r="12" fill="#e0362c"/><path d="M12 12 1.600 6A12 12 0 0 0 12 24l5.200-9z" fill="#2f9e44"/><path d="M12 6h10.500A12 12 0 0 1 12 24l5.200-9A6 6 0 0 0 12 6z" fill="#f7c325"/><circle cx="12" cy="12" r="5.500" fill="#fff"/><circle cx="12" cy="12" r="4.400" fill="#2f7fe0"/></svg></div>
      <div class="tk"><svg class="ti-c" viewBox="0 0 24 24"><circle cx="12" cy="12" r="12" fill="#b84a3c"/><circle cx="12" cy="12" r="9" fill="#c9897d"/><rect x="7" y="6" width="10" height="12" rx="2" fill="#7d1d14"/><path d="M12 6v12" stroke="#e8b9b0" stroke-width="1.500"/></svg></div>
      <div class="tk"><svg class="ti-c" viewBox="0 0 24 24"><rect x="1" y="1" width="22" height="22" rx="4" fill="#d8d8d8"/><circle cx="12" cy="11" r="8.500" fill="#333"/><circle cx="12" cy="11" r="5" fill="#8a8a8a"/><circle cx="12" cy="11" r="2.500" fill="#222"/><rect x="3" y="20" width="18" height="3" fill="#555"/></svg></div>
      <div class="tk"><svg class="ti-c" viewBox="0 0 24 24"><rect x="5" y="0" width="19" height="24" rx="1" fill="#2b7cd3"/><rect x="5" y="0" width="19" height="6" fill="#41a5ee"/><rect x="5" y="12" width="19" height="6" fill="#185abd"/><rect x="0" y="6" width="13" height="13" fill="#185abd"/><text x="6.500" y="16.500" class="tk-letter">W</text></svg></div>
      <div class="tk"><svg class="ti-c" viewBox="0 0 24 24"><rect x="5" y="0" width="19" height="24" rx="1" fill="#21a366"/><rect x="14" y="0" width="10" height="6" fill="#33c481"/><rect x="5" y="12" width="9" height="12" fill="#107c41"/><rect x="14" y="12" width="10" height="6" fill="#185c37"/><rect x="0" y="6" width="13" height="13" fill="#107c41"/><text x="6.500" y="16.500" class="tk-letter">X</text></svg></div>
      <div class="tk"><svg class="ti-c" viewBox="0 0 24 24"><rect x="1" y="3" width="22" height="18" rx="1" fill="#3f9ad6"/><rect x="3" y="6" width="8" height="11" fill="#e8f3fa"/><path d="M13 7h8M13 10h8M13 13h8M13 16h8" stroke="#e8f3fa" stroke-width="1.500"/><circle cx="7" cy="10" r="2.400" fill="#3f9ad6"/></svg></div>
      <div class="tk tk-run tk-active"><svg class="ti-s" viewBox="0 0 20 20"><path d="M6 3h9l3 7-3 7H6l-3-7z" fill="none" stroke="#fff" stroke-width="3.400" stroke-dasharray="13 4"/></svg></div>
      <div class="tk tk-run"><svg class="ti-p"><use href="#w-paper"/></svg></div>
      <div class="tk tk-run"><svg class="ti-c" viewBox="0 0 24 24"><path d="M1 3h9l2 3h11v17H1z" fill="#f2c043"/><path d="M1 10h22v13H1z" fill="#f8d775"/><rect x="8" y="15" width="8" height="8" fill="#3a8fd1"/></svg></div>
      <div class="tk tk-run"><svg class="ti-p"><use href="#w-paper"/></svg></div>
      <div class="tk tk-run"><svg class="ti-c" viewBox="0 0 24 24"><rect x="1" y="0" width="22" height="24" rx="3" fill="#a8110e"/><path d="M5 19c3-2 6-8 6-13 0-3 2-3 2 0 0 4 3 9 6 9-4 0-10 1-14 4z" fill="none" stroke="#fff" stroke-width="1.700"/></svg></div>
      <div class="tk tk-run"><svg class="ti-c" viewBox="0 0 24 24"><rect x="0" y="0" width="24" height="24" fill="#ef443b"/><path d="M8 7l5 5-5 5-5-5z" fill="#fff"/><path d="M15 7l5 5-5 5 -2-2 3-3-3-3z" fill="#ffb3ad"/></svg></div>
      <div class="tray">
        <svg class="tr-chev" viewBox="0 0 14 8"><path d="M1 7 7 1l6 6" fill="none" stroke="#ddd" stroke-width="1.400"/></svg>
        <svg class="tr tr-o" viewBox="0 0 16 16"><rect x="4" y="0" width="12" height="16" fill="#1f78c8"/><rect x="0" y="3" width="10" height="10" fill="#0f5aa8"/><circle cx="5" cy="8" r="2.500" fill="none" stroke="#fff" stroke-width="1.300"/></svg>
        <svg class="tr" viewBox="0 0 16 16"><rect x="1" y="1" width="14" height="14" rx="2" fill="#1f8a96"/><ellipse cx="8" cy="8" rx="5" ry="3" fill="#cfeef2"/><circle cx="8" cy="8" r="1.600" fill="#124f58"/></svg>
        <svg class="tr" viewBox="0 0 16 16"><rect x="0" y="1" width="15" height="15" fill="#e8e8e8"/><path d="M0 1h7l-3 7 3 8H0z" fill="#e0202c"/><path d="M7 6h7v9H7z" fill="#444"/><path d="M5 1h4L6 8z" fill="#c01420"/></svg>
        <svg class="tr" viewBox="0 0 16 16"><path d="M1 6h3l4-4v12l-4-4H1z" fill="none" stroke="#ccc"/><path d="M10 5.500a4 4 0 0 1 0 5M12 4a6 6 0 0 1 0 8" fill="none" stroke="#aaa"/></svg>
        <svg class="tr" viewBox="0 0 16 16"><path d="M4 2h11v9H4zM1 4h5v8H1zM8 11v3M4 14.500h9" fill="none" stroke="#ddd"/></svg>
        <div class="clock"><span>14:46</span><span>04/11/2024</span></div>
        <div class="notif"><svg class="notif-i" viewBox="0 0 16 16"><path d="M1 1h14v11H6l-3 3v-3H1z" fill="#f2f2f2"/><path d="M3 4h10M3 6.500h10M3 9h6" stroke="#333"/></svg><span class="badge">1</span></div>
      </div>
    </div>
  </main>
</div>
<div class="bottombar"></div>
</body>
</html>
```
FILE: styles.css
```css
* { box-sizing: border-box; }
html, body { margin: 0; padding: 0; height: 937px; overflow: hidden; }
body { font-family: "Noto Sans", "Open Sans", sans-serif; font-size: 11px; color: #555; background: #6f6f6f; display: flex; flex-direction: column; }
.defs { display: none; }

.browserbar { height: 10px; background: #ecedeb; border-top: 3px solid #c4c4c4; flex: none; }
.browsermark { display: block; width: 36px; height: 2px; margin: -3px 0 0 1422px; background: #e8574f; }

.banner { height: 50px; flex: none; background: #ff4339; color: #fff; font-weight: 600; font-size: 16.5px; display: flex; align-items: center; justify-content: center; white-space: pre; padding-left: 44px; }
.banner-link { text-decoration: underline; }
.banner-dot { margin-left: 8px; }

.desk { flex: none; height: 872px; padding: 0 12px 0 60px; }
.window { height: 872px; display: flex; flex-direction: column; background: #f0f0f0; }

.titlebar { height: 31px; flex: none; background: #0e6a97; color: #fff; display: flex; align-items: stretch; }
.qat { width: 246px; display: flex; align-items: center; padding: 0 0 0 9px; flex: none; color: #eaf3f7; }
.qi { width: 16px; height: 16px; flex: none; }
.qc { width: 8px; height: 5px; margin-left: 3px; flex: none; }
.qat-sep { width: 1px; height: 21px; background: #8dbbd0; margin: 0 9px; flex: none; }
.q6 { margin-left: 6px; }
.q7 { margin-left: 7px; }
.q8 { margin-left: 8px; }
.q9 { margin-left: 9px; }
.wintitle { width: 843px; flex: none; text-align: center; font-size: 10.5px; line-height: 31px; letter-spacing: -.22px; color: #e8f2f6; white-space: nowrap; padding-left: 213px; }
.sistema { width: 127px; flex: none; background: #105878; text-align: center; line-height: 31px; font-size: 10.5px; letter-spacing: -.2px; color: #dfeaf0; }
.winbtns { flex: 1; display: flex; align-items: center; justify-content: flex-end; gap: 34px; padding-right: 16px; color: #fff; }
.wb { font-size: 13px; line-height: 1; width: 12px; text-align: center; }
.wbi { width: 12px; height: 12px; flex: none; }

.tabbar { height: 25px; flex: none; background: #0e6a97; color: #eaf3f7; display: flex; align-items: stretch; }
.menuicon { width: 14px; height: 16px; margin: 5px 13px 0 13px; flex: none; color: #fff; }
.tab { padding: 0 12.5px; font-size: 10.5px; letter-spacing: -.33px; line-height: 25px; white-space: nowrap; flex: none; }
.tab-active { background: #e6e6e6; color: #666; width: 142px; padding: 0; text-align: center; }
.tab-ctx { width: 127px; flex: none; margin-left: 1px; background: #105878; display: flex; }
.tab-tools { flex: 1; display: flex; justify-content: flex-end; align-items: center; gap: 8px; padding-right: 9px; color: #fff; }
.ti { width: 14px; height: 14px; flex: none; }
.ti-chev { width: 8px; height: 5px; flex: none; }
.ti-up { transform: rotate(180deg); }
.ti-near { margin-left: -4px; margin-right: 3px; }

.ribbon { height: 96px; flex: none; background: #e6e6e6; border-bottom: 1px solid #c6c6c6; display: flex; }
.rgroup { display: flex; flex-direction: column; border-right: 1px solid #cfcfcf; flex: none; }
.g-cad { width: 784px; }
.g-conv { width: 133px; }
.g-alt { width: 175px; }
.g-rel { width: 75px; }
.rbody { height: 80px; display: flex; flex: none; padding-top: 4px; }
.rcenter { justify-content: center; }
.rlabel { text-align: center; font-size: 11px; letter-spacing: -.3px; color: #555; line-height: 15px; }
.on { color: #3e3e3e; }
.rcol { display: flex; flex-direction: column; justify-content: space-around; height: 72px; flex: none; }
.sep { border-left: 1px solid #d2d2d2; }
.c-big { width: 127px; flex-direction: row; justify-content: flex-start; }
.c-a { width: 169px; padding-left: 8px; }
.c-b { width: 144px; padding-left: 8px; }
.c-c { width: 171px; padding-left: 11px; }
.c-d { width: 88px; padding-left: 7px; }
.c-e { width: 84px; padding-left: 7px; }
.c-f { width: 175px; padding-left: 9px; }
.two { justify-content: center; gap: 8px; }
.ritem { display: flex; align-items: center; font-size: 10.5px; letter-spacing: -.2px; color: #888; white-space: nowrap; height: 24px; }
.c-a .ritem, .c-c .ritem, .c-d .ritem, .c-e .ritem { letter-spacing: -.36px; }
.ritem.on { color: #444; }
.ri { width: 16px; height: 16px; margin-right: 4px; flex: none; color: #8a8a8a; }
.ritem.on .ri { color: #444; }
.rc { width: 8px; height: 5px; margin-left: 8px; flex: none; color: #aaa; }
.ritem.on .rc { color: #555; }
.dollar { width: 12px; margin: 0 6px 0 1px; font-size: 15px; font-weight: 700; color: #888; }
.bigbtn { display: flex; flex-direction: column; align-items: center; font-size: 10.5px; letter-spacing: -.2px; text-align: center; color: #888; line-height: 12.5px; }
.c-big .bigbtn:first-child { width: 66px; margin-left: 4px; }
.c-big .bigbtn:last-child { width: 50px; margin-left: 0; }
.bigicon { width: 30px; height: 30px; margin: 4px 0 6px; color: #8a8a8a; }
.bigicon.dark { color: #444; }
.bookicon { width: 28px; height: 32px; margin: 4px 0 5px; color: #7e7e7e; }
.b-conv { width: 56px; }
.rc2 { width: 8px; height: 5px; margin-top: 3px; color: #aaa; }
.rc2.on { color: #555; }
.reporticon { width: 24px; height: 34px; margin: 4px 0 3px; }
.b-rel { width: 60px; }

.doctabs { height: 26px; flex: none; display: flex; align-items: flex-end; padding-left: 3px; gap: 1px; background: #f0f0f0; }
.doctab { height: 23px; width: 141px; background: #e4e4e4; border: 1px solid #cdcdcd; border-bottom: 0; font-size: 10.5px; line-height: 21px; padding-left: 5px; color: #555; white-space: nowrap; letter-spacing: -.1px; }
.doctab-active { height: 25px; width: 145px; background: #f3f3f3; line-height: 23px; }
.x { margin-left: 12px; color: #777; font-size: 10px; }

.workspace { height: 630px; flex: none; display: flex; align-items: flex-start; padding-left: 3px; background: #f0f0f0; }
.panel { width: 1523px; height: 630px; flex: none; display: flex; flex-direction: column; border: 1px solid #a9a9a9; border-top: 2px solid #777; background: #fff; }
.tb { display: flex; align-items: center; background: #fff; flex: none; }
.tb1 { height: 27px; border-bottom: 1px solid #ddd; padding: 5px 0 0 5px; }
.t1 { width: 16px; height: 16px; flex: none; }
.t-pen { width: 14px; height: 14px; }
.t-r { margin-left: 1px; }
.t-t { margin-left: -1px; }
.vs { width: 1px; height: 100%; background: #ddd; margin: 0 5px; flex: none; }
.g8 { margin-left: 7.3px; }
.g-c { margin-left: 4px; }
.tt { font-size: 12px; margin-left: 4px; color: #3a3a3a; white-space: nowrap; }
.pg { margin-left: 7px; margin-right: 15px; }
.ca { width: 8px; height: 5px; margin-left: 9px; color: #444; flex: none; }
.ca-f { margin-left: 12px; }
.g-p { margin-left: 9px; }
.tb2 { height: 35px; border-bottom: 1px solid #ddd; padding-left: 3px; gap: 5px; }
.a { width: 26px; height: 26px; flex: none; margin-top: -4px; }
.a-t { margin-left: -4px; }
.a-w { margin-left: 3px; }
.tb3 { height: 25px; padding: 0 0 1px 3px; }
.lt { color: #2f7d96; font-size: 11px; letter-spacing: -.15px; white-space: nowrap; }
.vs2 { margin: 0 6px; height: 20px; }
.ca2 { width: 6px; height: 4px; margin: 0 0 0 4px; color: #2f7d96; flex: none; }
.lb { width: 25px; height: 24px; display: flex; align-items: center; justify-content: center; flex: none; }
.l-first { margin-left: 4px; }
.l { width: 16px; height: 16px; }
.lb-on { background: #cfdff0; border: 1px solid #bcd0e4; }
.lb-g { margin: 0 2px; width: 24px; }
.ca3 { width: 6px; height: 4px; margin: 0 7px 0 -4px; color: #3f5e6c; flex: none; }
.abc { margin-left: 5px; font-size: 7.5px; font-weight: 800; color: #3f6a80; }

.groupbar { height: 31px; flex: none; background: #f0f0f0; display: flex; align-items: center; justify-content: space-between; padding: 3px 2px 0 3px; color: #2f7d96; border-bottom: 1px solid #c8c8c8; font-size: 10.5px; letter-spacing: -.17px; }
.mag { width: 16px; height: 16px; margin-top: -3px; flex: none; }

.gridwrap { height: 457px; flex: none; overflow: hidden; position: relative; background: #fff; }
.grid { border-collapse: separate; border-spacing: 0; table-layout: fixed; width: 1521px; font-size: 10.5px; }
.w21 { width: 21px; } .w40 { width: 40px; } .w62 { width: 62px; } .w62b { width: 62px; } .w82 { width: 82px; } .w52 { width: 52px; } .w98 { width: 98px; } .w120 { width: 120px; } .w112 { width: 112px; } .w56 { width: 56px; } .w107 { width: 107px; } .w105 { width: 105px; } .w95 { width: 95px; } .w195 { width: 195px; } .w78 { width: 78px; } .w49 { width: 49px; } .w46 { width: 46px; } .w22 { width: 21px; }
th { height: 23px; padding: 1px 0 0 3px; font-weight: 400; text-align: left; color: #2f7d96; background: #fff; border-right: 1px solid #d6d6d6; white-space: nowrap; overflow: hidden; letter-spacing: -.13px; }
th.rh { background: #f0f0f0; }
th.chk { text-align: center; color: #666; padding: 1px 0 0; border-right: 2px solid #999; }
td { height: 28px; padding: 0 0 0 7px; border-right: 1px solid #d6d6d6; color: #565656; white-space: nowrap; overflow: hidden; letter-spacing: -.06px; }
.alt td { background: #dcdcdc; }
td.r { text-align: right; padding: 0 6px 0 0; }
td.rh, .alt td.rh { background: #fff; border-right: 0; padding: 0 0 0 8px; }
td.chk { padding: 0; text-align: center; border-right: 2px solid #999; }
td.sel { background: #cfdff0 !important; outline: 1px dotted #333; outline-offset: -1px; }
td.gut { border-right: 0; background: #fff !important; }
.alt td.gut { background: linear-gradient(to right, #dcdcdc 5px, #fff 5px) !important; }
.arrow { display: block; width: 0; height: 0; border-left: 4px solid #8a8a8a; border-top: 3px solid transparent; border-bottom: 3px solid transparent; }
.cb { display: inline-block; width: 14px; height: 14px; background: #fff; border: 1px solid #b4b4b4; vertical-align: middle; font-size: 10px; line-height: 12px; color: #777; }

.vscroll { position: absolute; right: 1px; top: 25px; width: 15px; height: 429px; display: flex; flex-direction: column; }
.sbtn { height: 15px; width: 15px; flex: none; background: #f3f3f3; border: 1px solid #bbb; font-size: 7px; line-height: 13px; text-align: center; color: #666; }
.vthumb { height: 21px; background: #fff; border: 1px solid #bbb; flex: none; }
.vspace { flex: 1; }

.gridfoot { flex: 1; background: #f0f0f0; border-top: 1px solid #d0d0d0; display: flex; flex-direction: column; }
.sumrow { height: 35px; flex: none; padding: 5px 0 0 22px; }
.sumbox { display: block; width: 36px; height: 23px; background: #fff; border: 1px solid #d2d2d2; text-align: right; padding-right: 4px; font-size: 11px; line-height: 21px; color: #555; }
.hscroll { height: 16px; flex: none; display: flex; align-items: stretch; }
.harrow { width: 15px; flex: none; background: #f3f3f3; border: 1px solid #bbb; font-size: 8px; line-height: 13px; text-align: center; color: #666; }
.hthumb { width: 369px; flex: none; background: #fff; border: 1px solid #bbb; }
.hspace { flex: 1; }
.sbtn-r { font-size: 9px; }

.exec { width: 22px; height: 74px; margin-top: -21px; margin-left: 3px; flex: none; background: #e3e3e3; display: flex; flex-direction: column; align-items: center; padding: 5px 0 0 2px; position: relative; z-index: 1; }
.execicon { width: 16px; height: 16px; flex: none; }
.exectext { writing-mode: vertical-rl; font-size: 10.5px; letter-spacing: -.1px; color: #555; margin-top: 1px; }

.status { height: 25px; flex: none; background: #f0f0f0; display: flex; align-items: flex-end; padding-left: 5px; gap: 4px; }
.st { height: 21px; background: #e3e3e3; display: flex; align-items: center; padding: 0 0 1px 6px; white-space: nowrap; font-size: 10.5px; letter-spacing: -.3px; color: #555; flex: none; }
.st-sis { width: 67px; }
.st-men { width: 82px; }
.sti { width: 16px; height: 14px; margin-right: 1px; flex: none; }
.sti-f { height: 18px; margin-right: 0; }
.st-info { width: 448px; margin-left: 1px; padding-left: 7px; }
.st-f { width: 153.5px; flex: none; }
.st-c { width: 137.5px; flex: none; }
.st-x { width: 76px; flex: none; }

.taskbar { height: 39px; flex: none; background: #111; display: flex; align-items: stretch; padding-left: 1px; border-right: 3px solid #2a2a2a; }
.tk { width: 47.6px; flex: none; display: flex; align-items: center; justify-content: center; }
.tk-run { border-bottom: 2px solid #6ba4d6; background-clip: padding-box; }
.tk-active { background-color: #333; }
.ti-w { width: 18px; height: 18px; }
.ti-c { width: 24px; height: 24px; }
.ti-s { width: 20px; height: 20px; }
.ti-p { width: 20px; height: 26px; }
.tk-letter { font-size: 10px; font-weight: 700; fill: #fff; text-anchor: middle; }
.tray { flex: 1; display: flex; align-items: center; justify-content: flex-end; padding-right: 8px; color: #ddd; }
.tr-chev { width: 14px; height: 8px; margin-right: 9px; flex: none; }
.tr { width: 16px; height: 16px; margin-right: 8px; flex: none; }
.tr-o { margin-right: 5px; }
.clock { width: 68px; display: flex; flex-direction: column; align-items: center; font-size: 11px; letter-spacing: -.2px; line-height: 17px; color: #e6e6e6; margin-left: -4px; }
.notif { width: 30px; height: 24px; position: relative; margin-left: 11px; }
.notif-i { width: 18px; height: 18px; display: block; margin-left: 2px; }
.badge { position: absolute; right: 3px; bottom: -2px; width: 14px; height: 14px; border-radius: 50%; background: #666; color: #fff; font-size: 10px; line-height: 14px; text-align: center; }

.bottombar { flex: 1; background: #dbe6f2; }
```
